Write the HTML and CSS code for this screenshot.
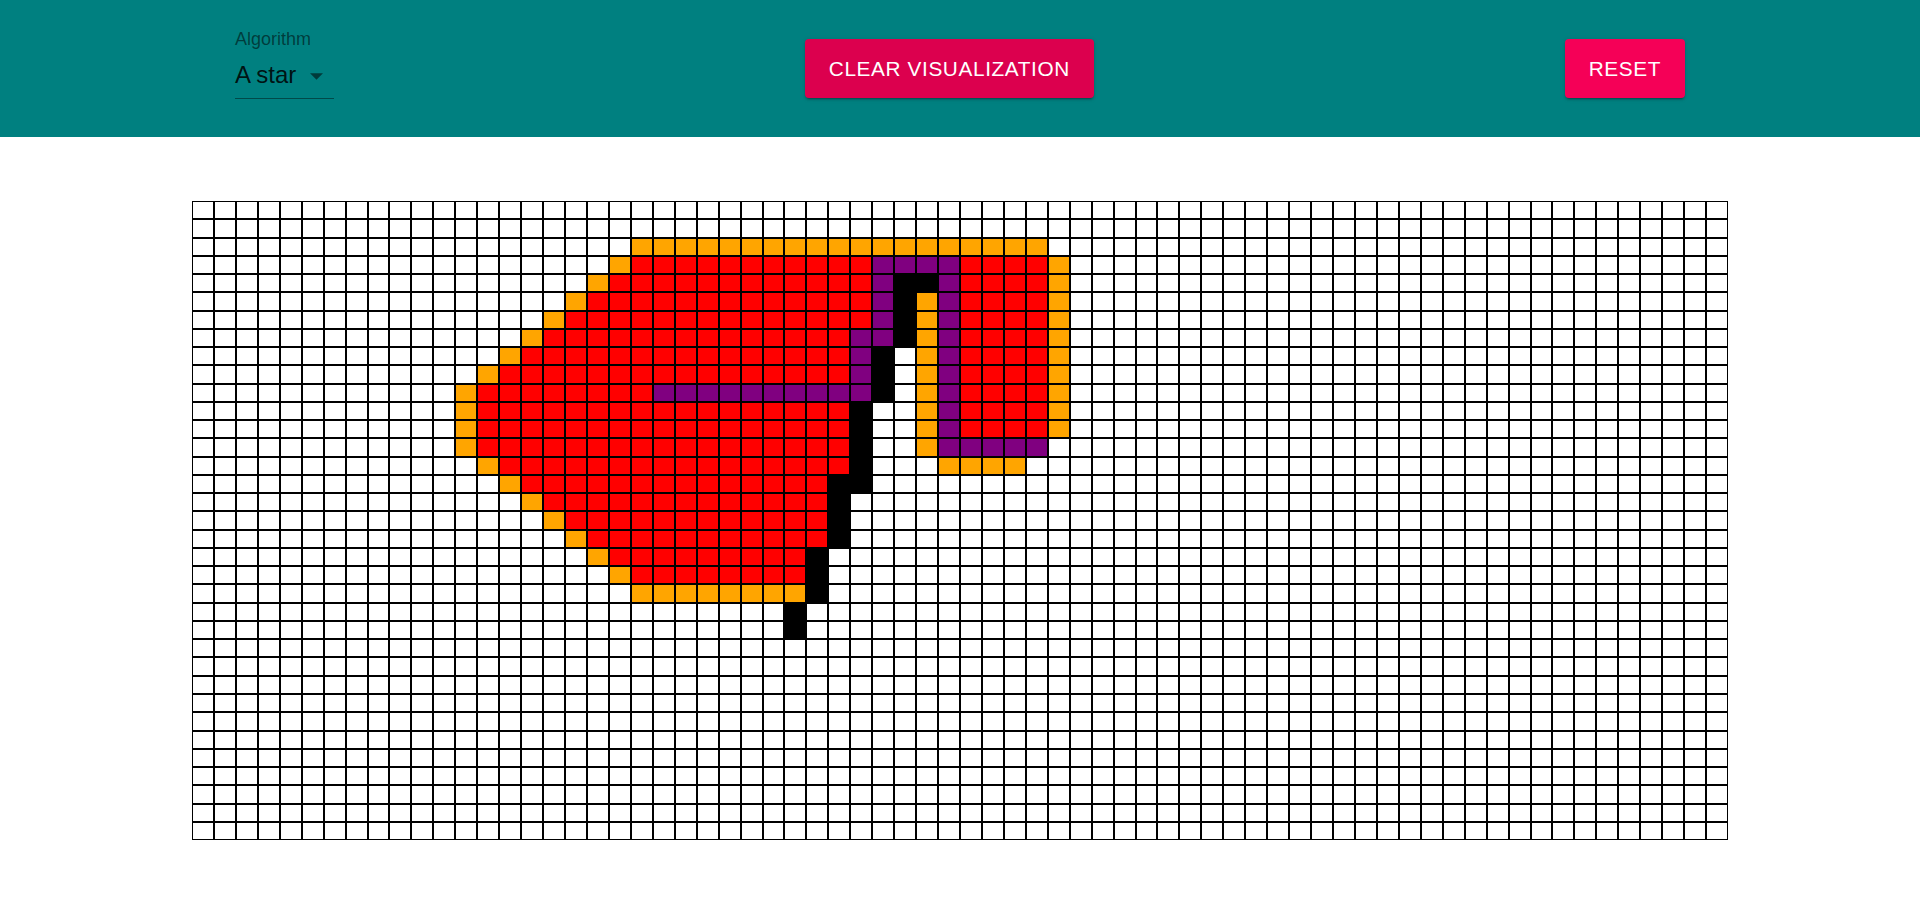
FILE: index.html
```html
<!DOCTYPE html>
<html lang="en">
<head>
<meta charset="utf-8">
<title>Pathfinding Visualizer</title>
<link rel="stylesheet" href="styles.css">
</head>
<body>
<header class="app-bar">
  <div class="select-field">
    <span class="select-label">Algorithm</span>
    <div class="select-value">
      <span class="select-text">A star</span>
      <svg class="select-arrow" viewBox="0 0 10 5" width="13" height="7" aria-hidden="true"><path d="M0 0l5 5 5-5z"/></svg>
    </div>
  </div>
  <button class="btn btn-clear" type="button">Clear Visualization</button>
  <button class="btn btn-reset" type="button">Reset</button>
</header>
<main class="board">
  <div class="grid" id="grid"></div>
</main>
<script src="script.js"></script>
</body>
</html>
```

FILE: styles.css
```css
html, body {
  margin: 0;
  padding: 0;
  background: #ffffff;
  font-family: "Liberation Sans", Arial, sans-serif;
}

.app-bar {
  height: 137px;
  background: #008080;
  display: flex;
  align-items: center;
  justify-content: space-between;
  padding: 0 235px;
  box-sizing: border-box;
}

.select-field {
  display: flex;
  flex-direction: column;
  width: 99px;
  padding-bottom: 8px;
}

.select-label {
  font-size: 18px;
  line-height: 18px;
  height: 18px;
  color: rgba(0, 0, 0, 0.54);
}

.select-value {
  margin-top: 15px;
  display: flex;
  align-items: center;
  padding-bottom: 11px;
  border-bottom: 1px solid rgba(0, 0, 0, 0.42);
}

.select-text {
  font-size: 24px;
  line-height: 24px;
  color: rgba(0, 0, 0, 0.87);
}

.select-arrow {
  margin-left: auto;
  margin-right: 11px;
  margin-top: 2px;
  fill: rgba(0, 0, 0, 0.54);
}

.btn {
  height: 59px;
  padding: 0 24px;
  border: none;
  border-radius: 4px;
  color: #ffffff;
  font-family: "Liberation Sans", Arial, sans-serif;
  font-size: 20.8px;
  letter-spacing: 0.6px;
  text-transform: uppercase;
  box-shadow: 0 3px 1px -2px rgba(0, 0, 0, 0.2), 0 2px 2px 0 rgba(0, 0, 0, 0.14), 0 1px 5px 0 rgba(0, 0, 0, 0.12);
  cursor: pointer;
}

.btn-clear {
  background: #dc004e;
}

.btn-reset {
  background: #f50057;
}

.board {
  padding-top: 64px;
}

.grid {
  width: 80vw;
  height: 70vh;
  margin: 0 auto;
  display: grid;
  grid-template-columns: repeat(70, 1fr);
  grid-template-rows: repeat(35, 1fr);
}

.cell {
  border: 1px solid #000000;
  background: #ffffff;
  box-sizing: border-box;
  min-width: 0;
  min-height: 0;
}

.cell.open {
  background: #ffa500;
}

.cell.closed {
  background: #ff0000;
}

.cell.trace {
  background: #800080;
}

.cell.path {
  background: #000000;
}
```

FILE: script.js
```javascript
(function () {
  var COLS = 70;
  var ROWS = 35;
  var names = { o: 'open', r: 'closed', p: 'trace', k: 'path' };
  var row11 = [[12,12,'o'],[13,29,'r'],[30,30,'k'],[33,33,'o'],[34,34,'p'],[35,38,'r'],[39,39,'o']];
  var spans = {
    2: [[20,38,'o']],
    3: [[19,19,'o'],[20,30,'r'],[31,34,'p'],[35,38,'r'],[39,39,'o']],
    4: [[18,18,'o'],[19,30,'r'],[31,31,'p'],[32,33,'k'],[34,34,'p'],[35,38,'r'],[39,39,'o']],
    5: [[17,17,'o'],[18,30,'r'],[31,31,'p'],[32,32,'k'],[33,33,'o'],[34,34,'p'],[35,38,'r'],[39,39,'o']],
    6: [[16,16,'o'],[17,30,'r'],[31,31,'p'],[32,32,'k'],[33,33,'o'],[34,34,'p'],[35,38,'r'],[39,39,'o']],
    7: [[15,15,'o'],[16,29,'r'],[30,31,'p'],[32,32,'k'],[33,33,'o'],[34,34,'p'],[35,38,'r'],[39,39,'o']],
    8: [[14,14,'o'],[15,29,'r'],[30,30,'p'],[31,31,'k'],[33,33,'o'],[34,34,'p'],[35,38,'r'],[39,39,'o']],
    9: [[13,13,'o'],[14,29,'r'],[30,30,'p'],[31,31,'k'],[33,33,'o'],[34,34,'p'],[35,38,'r'],[39,39,'o']],
    10: [[12,12,'o'],[13,20,'r'],[21,30,'p'],[31,31,'k'],[33,33,'o'],[34,34,'p'],[35,38,'r'],[39,39,'o']],
    11: row11,
    12: row11,
    13: [[12,12,'o'],[13,29,'r'],[30,30,'k'],[33,33,'o'],[34,38,'p']],
    14: [[13,13,'o'],[14,29,'r'],[30,30,'k'],[34,37,'o']],
    15: [[14,14,'o'],[15,28,'r'],[29,30,'k']],
    16: [[15,15,'o'],[16,28,'r'],[29,29,'k']],
    17: [[16,16,'o'],[17,28,'r'],[29,29,'k']],
    18: [[17,17,'o'],[18,28,'r'],[29,29,'k']],
    19: [[18,18,'o'],[19,27,'r'],[28,28,'k']],
    20: [[19,19,'o'],[20,27,'r'],[28,28,'k']],
    21: [[20,27,'o'],[28,28,'k']],
    22: [[27,27,'k']],
    23: [[27,27,'k']]
  };
  var grid = document.getElementById('grid');
  var frag = document.createDocumentFragment();
  for (var r = 0; r < ROWS; r++) {
    var line = new Array(COLS).fill('');
    (spans[r] || []).forEach(function (s) {
      for (var c = s[0]; c <= s[1]; c++) line[c] = names[s[2]];
    });
    for (var c = 0; c < COLS; c++) {
      var cell = document.createElement('div');
      cell.className = line[c] ? 'cell ' + line[c] : 'cell';
      frag.appendChild(cell);
    }
  }
  grid.appendChild(frag);
})();
```
